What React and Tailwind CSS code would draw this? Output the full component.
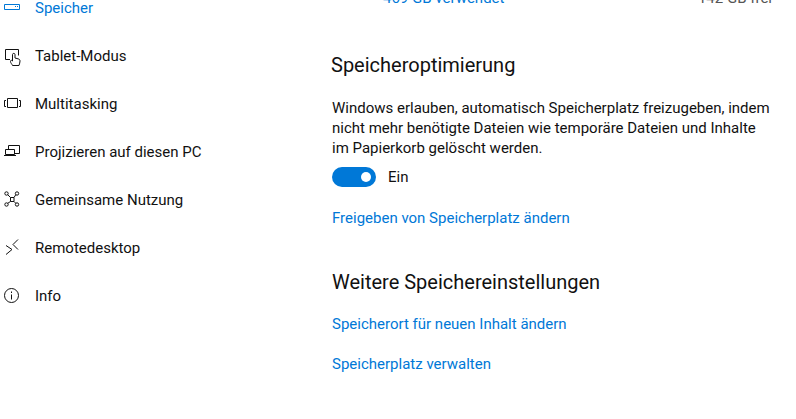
import React from 'react';

const Icon = ({ children }) => (
  <svg
    width="16"
    height="16"
    viewBox="0 0 16 16"
    className="overflow-visible"
    fill="none"
    stroke="currentColor"
    strokeWidth="1"
  >
    {children}
  </svg>
);

const icons = {
  speicher: (
    <Icon>
      <path d="M0.5 4.5h15v5h-15z" />
      <path d="M11 6.5h1M13 6.5h1" />
    </Icon>
  ),
  tablet: (
    <Icon>
      <path d="M6 11.5H1.5v-10h13v6" />
      <path d="M8.500 17.500c-.5-1.500-2-2.500-2-4s1-1.500 2-.5V6.500c0-1.500 2.500-1.500 2.500 0V10l3 .8c1.500.4 2 1 2 2.200s-.5 3-1 4.500z" />
    </Icon>
  ),
  multitasking: (
    <Icon>
      <path d="M3.500 2.500h10v9h-10z" />
      <path d="M2 4.500H0.500v6H2M15 4.500h1.500v6H15" />
    </Icon>
  ),
  projizieren: (
    <Icon>
      <path d="M4.500 5V1.500h11v8H11" />
      <path d="M1.500 5.500h9v5h-9zM0 11.500h12" />
    </Icon>
  ),
  teilen: (
    <Icon>
      <circle cx="2.500" cy="1.500" r="1.700" />
      <circle cx="13" cy="1.500" r="1.700" />
      <circle cx="2.500" cy="12.500" r="1.700" />
      <circle cx="13" cy="12.500" r="1.700" />
      <path d="M6.500 5.500h3.500v4H6.500zM3.700 2.700l2.800 2.800M11.800 2.700L10 5.500M3.700 11.300l2.800-1.800M11.800 11.300L10 9.500" />
    </Icon>
  ),
  remote: (
    <Icon>
      <path d="M2 5.500l6 4-6 5" />
      <path d="M14-.5l-5 5 5 5" />
    </Icon>
  ),
  info: (
    <Icon>
      <circle cx="7.500" cy="7.500" r="7" />
      <path d="M7.500 6.500v5M7.500 3.500v1.500" />
    </Icon>
  ),
};

const navItems = [
  { label: 'Speicher', icon: 'speicher', active: true },
  { label: 'Tablet-Modus', icon: 'tablet' },
  { label: 'Multitasking', icon: 'multitasking' },
  { label: 'Projizieren auf diesen PC', icon: 'projizieren' },
  { label: 'Gemeinsame Nutzung', icon: 'teilen' },
  { label: 'Remotedesktop', icon: 'remote' },
  { label: 'Info', icon: 'info' },
];

const App = () => {
  return (
    <div className="w-[796px] h-[419px] overflow-hidden bg-white flex font-['Roboto','Open_Sans',sans-serif] text-[15px] text-[#111111]">
      {/* Sidebar */}
      <nav className="w-[331px] shrink-0 -mt-[16px] pl-1">
        {navItems.map((item) => (
          <div key={item.label} className="h-12 flex items-center">
            <span className={`w-[31px] flex ${item.active ? 'text-[#0078d7]' : 'text-[#111111]'}`}>
              {icons[item.icon]}
            </span>
            <span className={item.active ? 'text-[#0078d7]' : ''}>{item.label}</span>
          </div>
        ))}
      </nav>

      {/* Content */}
      <main className="flex-1 -mt-[11px] pl-px">
        <div className="flex justify-between pl-[51px] pr-[24px] leading-[18px]">
          <span className="text-[#0078d7]">469 GB verwendet</span>
          <span className="text-[#555555]">142 GB frei</span>
        </div>
        <h2 className="text-[20px] leading-7 mt-[44px] -ml-px">Speicheroptimierung</h2>
        <p className="mt-[19px] w-[440px] leading-[20px]">
          Windows erlauben, automatisch Speicherplatz freizugeben, indem nicht mehr benötigte Dateien wie temporäre Dateien und Inhalte im Papierkorb gelöscht werden.
        </p>
        <div className="flex items-center gap-3 mt-[9px] h-5">
          <div className="w-11 h-5 rounded-full bg-[#0078d7] flex items-center justify-end pr-[5px]">
            <div className="w-2.5 h-2.5 rounded-full bg-white" />
          </div>
          <span>Ein</span>
        </div>
        <a className="block mt-[21px] leading-5 text-[#0078d7]">Freigeben von Speicherplatz ändern</a>
        <h2 className="text-[20px] leading-7 mt-[40px]">Weitere Speichereinstellungen</h2>
        <a className="block mt-[18px] leading-5 text-[#0078d7]">Speicherort für neuen Inhalt ändern</a>
        <a className="block mt-5 leading-5 text-[#0078d7]">Speicherplatz verwalten</a>
      </main>
    </div>
  );
};

export default App;
